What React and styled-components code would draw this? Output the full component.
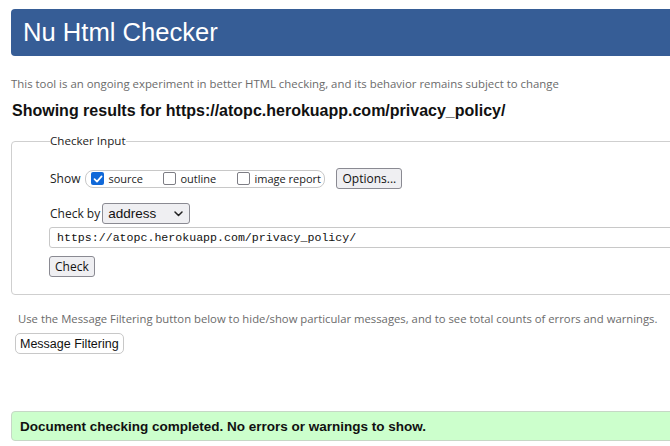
import React from "react";
import styled, { createGlobalStyle } from "styled-components";

const Global = createGlobalStyle`
  html, body {
    margin: 0;
    padding: 0;
    background: #fff;
    overflow: hidden;
  }
  body {
    font-family: "Open Sans", "Noto Sans", sans-serif;
    color: #222;
  }
`;

export const Page = styled.div`
  width: 720px;
  padding: 9px 0 0 11px;
  box-sizing: border-box;
`;

export const Header = styled.header`
  height: 47px;
  background: #365d96;
  border-radius: 4px 0 0 4px;
  display: flex;
  align-items: center;
  padding-left: 12px;
`;

export const Title = styled.h1`
  margin: 0;
  font-family: "Liberation Sans", Arial, sans-serif;
  font-weight: normal;
  font-size: 25.6px;
  color: #fff;
`;

export const Note = styled.p`
  margin: ${(p) => p.$margin || "0"};
  font-size: ${(p) => p.$size || "11.4px"};
  line-height: 16px;
  color: #6b6b6b;
  padding-left: ${(p) => p.$indent || "0"};
  white-space: nowrap;
`;

export const Results = styled.h2`
  margin: 8px 0 0 1px;
  font-family: "Liberation Sans", Arial, sans-serif;
  font-size: 16px;
  line-height: 22px;
  font-weight: bold;
  color: #111;
`;

export const Fieldset = styled.fieldset`
  margin: 12px 0 0 0;
  padding: 0 0 17px 38px;
  border: 1px solid #cfcfcf;
  border-radius: 4px 0 0 4px;
  display: flex;
  flex-direction: column;
  align-items: flex-start;
  & > * {
    flex: none;
  }
`;

export const Legend = styled.legend`
  margin-left: 0;
  padding: 0;
  font-size: 11.6px;
  line-height: 14px;
  color: #222;
`;

export const Row = styled.div`
  display: flex;
  align-items: center;
  margin-top: ${(p) => p.$top || "0"};
  font-size: 12px;
`;

export const Label = styled.span`
  font-size: 12px;
  color: #222;
  margin-right: ${(p) => p.$gap || "5px"};
  white-space: nowrap;
`;

export const Pill = styled.div`
  display: flex;
  align-items: center;
  height: 18px;
  border: 1px solid #c8c8c8;
  border-radius: 8px;
  padding: 0 0 0 5px;
  width: 240px;
  box-sizing: border-box;
`;

export const Option = styled.label`
  display: flex;
  align-items: center;
  gap: 4px;
  font-size: 11px;
  color: #222;
  white-space: nowrap;
  width: ${(p) => p.$w || "auto"};
  flex: none;
`;

export const Box = styled.span`
  width: 13px;
  height: 13px;
  box-sizing: border-box;
  border-radius: 2px;
  display: inline-flex;
  align-items: center;
  justify-content: center;
  flex: none;
  background: ${(p) => (p.$checked ? "#1068d8" : "#fff")};
  border: ${(p) => (p.$checked ? "none" : "1.5px solid #7d7d84")};
`;

export const Button = styled.button`
  font-family: "Open Sans", "Noto Sans", sans-serif;
  font-size: 12px;
  color: #111;
  background: #efeff2;
  border: 1px solid #8a8a92;
  border-radius: 3px;
  height: 21px;
  padding: 0 5px;
  display: inline-flex;
  align-items: center;
  margin: ${(p) => p.$margin || "0"};
  white-space: nowrap;
`;

export const Select = styled.div`
  width: 88px;
  height: 21px;
  box-sizing: border-box;
  background: #efeff2;
  border: 1px solid #8a8a92;
  border-radius: 3px;
  display: flex;
  align-items: center;
  justify-content: space-between;
  padding: 0 6px 0 5px;
  font-family: "Liberation Sans", Arial, sans-serif;
  font-size: 13.5px;
  color: #111;
`;

export const UrlInput = styled.div`
  margin: 3px 0 0 -1px;
  width: 640px;
  height: 21px;
  box-sizing: border-box;
  border: 1px solid #c8c8c8;
  border-radius: 3px 0 0 3px;
  display: flex;
  align-items: center;
  padding-left: 7px;
  font-family: "Liberation Mono", "DejaVu Sans Mono", monospace;
  font-size: 11.6px;
  color: #111;
`;

export const FilterButton = styled.button`
  margin: 6px 0 0 4px;
  height: 21px;
  padding: 0 4px;
  font-family: "Liberation Sans", Arial, sans-serif;
  font-size: 12.5px;
  color: #111;
  background: #fff;
  border: 1px solid #c8c8c8;
  border-radius: 5px;
  display: inline-flex;
  align-items: center;
`;

export const Success = styled.div`
  margin-top: 57px;
  height: 30px;
  box-sizing: border-box;
  background: #ccffcc;
  border: 1px solid #c6d8c6;
  border-radius: 4px 0 0 4px;
  display: flex;
  align-items: center;
  padding-left: 8px;
  font-family: "Liberation Sans", Arial, sans-serif;
  font-weight: bold;
  font-size: 13.5px;
  color: #111;
`;

const Check = () => (
  <svg width="10" height="10" viewBox="0 0 10 10">
    <path d="M1.5 5.2 L4 7.6 L8.6 2.4" fill="none" stroke="#fff" strokeWidth="1.7" strokeLinecap="round" strokeLinejoin="round" />
  </svg>
);

const Chevron = () => (
  <svg width="9" height="6" viewBox="0 0 9 6">
    <path d="M1 1 L4.5 4.5 L8 1" fill="none" stroke="#222" strokeWidth="1.5" strokeLinecap="round" strokeLinejoin="round" />
  </svg>
);

export default function App() {
  return (
    <Page>
      <Global />
      <Header>
        <Title>Nu Html Checker</Title>
      </Header>
      <Note $margin="20px 0 0 0">
        This tool is an ongoing experiment in better HTML checking, and its behavior remains subject to change
      </Note>
      <Results>Showing results for https://atopc.herokuapp.com/privacy_policy/</Results>
      <Fieldset>
        <Legend>Checker Input</Legend>
        <Row $top="20px">
          <Label>Show</Label>
          <Pill>
            <Option $w="72px">
              <Box $checked>
                <Check />
              </Box>
              source
            </Option>
            <Option $w="74px">
              <Box />
              outline
            </Option>
            <Option>
              <Box />
              image report
            </Option>
          </Pill>
          <Button $margin="0 0 0 11px">Options...</Button>
        </Row>
        <Row $top="14px">
          <Label $gap="2px">Check by</Label>
          <Select>
            address
            <Chevron />
          </Select>
        </Row>
        <UrlInput>https://atopc.herokuapp.com/privacy_policy/</UrlInput>
        <Button $margin="8px 0 0 -1px">Check</Button>
      </Fieldset>
      <Note $margin="16px 0 0 0" $indent="7px" $size="11.3px">
        Use the Message Filtering button below to hide/show particular messages, and to see total counts of errors and warnings.
      </Note>
      <FilterButton>Message Filtering</FilterButton>
      <Success>Document checking completed. No errors or warnings to show.</Success>
    </Page>
  );
}
